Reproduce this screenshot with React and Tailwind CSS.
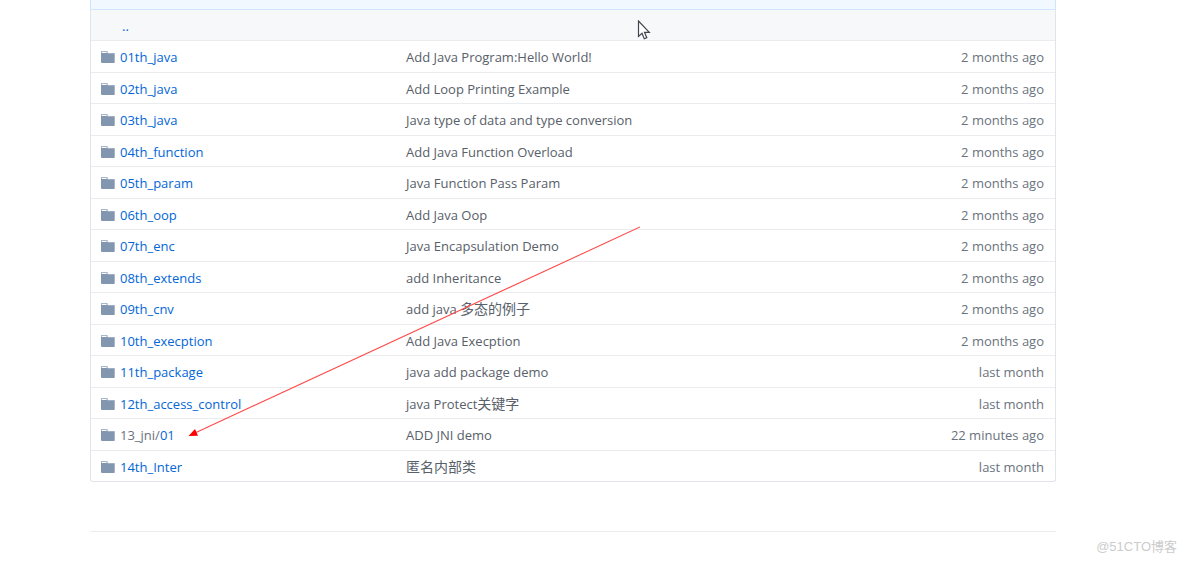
const files = [
  { name: "01th_java", message: "Add Java Program:Hello World!", age: "2 months ago" },
  { name: "02th_java", message: "Add Loop Printing Example", age: "2 months ago" },
  { name: "03th_java", message: "Java type of data and type conversion", age: "2 months ago" },
  { name: "04th_function", message: "Add Java Function Overload", age: "2 months ago" },
  { name: "05th_param", message: "Java Function Pass Param", age: "2 months ago" },
  { name: "06th_oop", message: "Add Java Oop", age: "2 months ago" },
  { name: "07th_enc", message: "Java Encapsulation Demo", age: "2 months ago" },
  { name: "08th_extends", message: "add Inheritance", age: "2 months ago" },
  { name: "09th_cnv", message: "add java ", messageZh: "多态的例子", age: "2 months ago" },
  { name: "10th_execption", message: "Add Java Execption", age: "2 months ago" },
  { name: "11th_package", message: "java add package demo", age: "last month" },
  { name: "12th_access_control", message: "java Protect", messageZh: "关键字", age: "last month" },
  { parent: "13_jni/", name: "01", message: "ADD JNI demo", age: "22 minutes ago" },
  { name: "14th_Inter", messageZh: "匿名内部类", age: "last month" },
];

const FolderIcon = () => (
  <svg width="14" height="14" viewBox="0 0 14 14" className="shrink-0" aria-hidden="true">
    <path d="M0 2Q0 1 1 1H5.5Q6.5 1 6.5 2V3H13Q13.7 3 13.7 3.7V12.3Q13.7 13 13 13H1Q0 13 0 12Z" fill="#8296b0" />
    <path d="M0 2Q0 1 1 1H5.5Q6.5 1 6.5 2V3H0Z" fill="#a9b6c8" />
    <path d="M1 2H5.5V3H1Z" fill="#ffffff" />
    <path d="M6.5 3H13Q13.7 3 13.7 3.7H6.5Z" fill="#a9b6c8" />
  </svg>
);

const FileRow = ({ file }) => (
  <tr className="odd:h-[32px] even:h-[31px]">
    <td className="border-t border-[#eaecef] pt-[1px] pl-[10px]">
      <div className="flex items-center gap-[5px]">
        <FolderIcon />
        <span className="whitespace-nowrap text-[#6a737d]">
          {file.parent}
          <a href={`#${file.name}`} className="text-[#0366d6] hover:underline">
            {file.name}
          </a>
        </span>
      </div>
    </td>
    <td className="border-t border-[#eaecef] pt-[1px] text-[#586069]">
      <a href={`#commit-${file.name}`}>
        {file.message}
        {file.messageZh && (
          <span lang="zh" className="text-[14px]">
            {file.messageZh}
          </span>
        )}
      </a>
    </td>
    <td className="border-t border-[#eaecef] pt-[1px] pr-[11px] text-right whitespace-nowrap text-[#6a737d]">
      {file.age}
    </td>
  </tr>
);

const ArrowNote = () => (
  <svg
    width="452"
    height="212"
    viewBox="0 0 452 212"
    className="pointer-events-none absolute top-[226px] left-[98px]"
    aria-hidden="true"
  >
    <path d="M452 1L8 206.500" stroke="#ff4a4a" strokeWidth="1.1" fill="none" />
    <path d="M0.500 210L7 203L10 209.800Z" fill="#f00" />
  </svg>
);

const Pointer = () => (
  <svg
    width="14"
    height="21"
    viewBox="0 0 14 21"
    className="pointer-events-none absolute top-[20px] left-[547px]"
    aria-hidden="true"
  >
    <path
      d="M1.500 1V16.500L5 13.300L7.300 18.800L9.800 17.700L7.500 12.300H12.300Z"
      fill="#fff"
      stroke="#43434f"
      strokeWidth="1.200"
    />
  </svg>
);

const App = () => {
  return (
    <div className="bg-white pr-[128px] pb-[29px] pl-[90px] font-['Open_Sans','Noto_Sans_CJK_SC',sans-serif] text-[13px] leading-[20px]">
      <div className="relative">
        <div className="h-[10px] border-x border-b border-[#cfe4fd] bg-[#f1f8ff]" />
        <table className="w-full table-fixed border-separate border-spacing-0 rounded-b-[3px] border-x border-b border-[#e1e4e8]">
          <colgroup>
            <col className="w-[315px]" />
            <col />
            <col className="w-[160px]" />
          </colgroup>
          <thead>
            <tr className="h-[30px] bg-[#f6f8fa]">
              <td colSpan={3} className="pt-[2px] pl-[31px]">
                <a href="#parent" className="text-[#0366d6]">
                  ..
                </a>
              </td>
            </tr>
          </thead>
          <tbody>
            {files.map((file) => (
              <FileRow key={file.name} file={file} />
            ))}
          </tbody>
        </table>
        <ArrowNote />
        <Pointer />
      </div>
      <footer className="mt-[49px] border-t border-[#eaecef]" />
      <p className="-mr-[121px] pt-[5px] text-right font-['Liberation_Sans','Noto_Sans_CJK_SC',sans-serif] text-[13px] text-[#cccccc]">
        @51CTO博客
      </p>
    </div>
  );
};

export default App;
